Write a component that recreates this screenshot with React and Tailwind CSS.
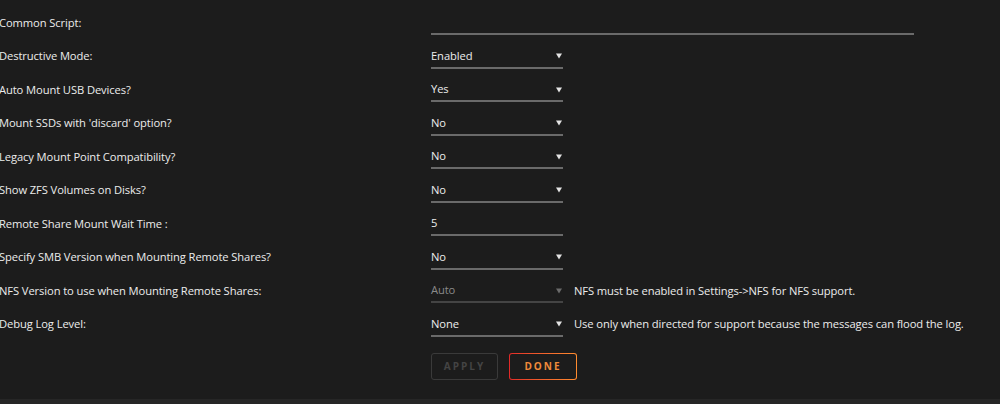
import React from 'react';

const rows = [
  { label: 'Common Script:', type: 'text', value: '', wide: true },
  { label: 'Destructive Mode:', type: 'select', value: 'Enabled' },
  { label: 'Auto Mount USB Devices?', type: 'select', value: 'Yes' },
  { label: "Mount SSDs with 'discard' option?", type: 'select', value: 'No' },
  { label: 'Legacy Mount Point Compatibility?', type: 'select', value: 'No' },
  { label: 'Show ZFS Volumes on Disks?', type: 'select', value: 'No' },
  { label: 'Remote Share Mount Wait Time :', type: 'text', value: '5' },
  { label: 'Specify SMB Version when Mounting Remote Shares?', type: 'select', value: 'No' },
  {
    label: 'NFS Version to use when Mounting Remote Shares:',
    type: 'select',
    value: 'Auto',
    disabled: true,
    note: 'NFS must be enabled in Settings->NFS for NFS support.',
  },
  {
    label: 'Debug Log Level:',
    type: 'select',
    value: 'None',
    note: 'Use only when directed for support because the messages can flood the log.',
  },
];

function Caret({ disabled }) {
  return (
    <svg width="6" height="6" viewBox="0 0 6 6" className="shrink-0">
      <path d="M0 0.5 H6 L3 5.5 Z" fill={disabled ? '#6b6b6b' : '#e4e4e4'} />
    </svg>
  );
}

function Control({ row }) {
  if (row.type === 'text') {
    return (
      <div
        className={`h-[25px] pt-[2px] flex items-center border-b-2 border-[#6a6a6a] text-[#ececec] ${
          row.wide ? 'w-[483px]' : 'w-[132px]'
        }`}
      >
        {row.value}
      </div>
    );
  }
  return (
    <div
      className={`h-[25px] w-[132px] pt-[2px] flex items-center justify-between pr-[1px] border-b-2 ${
        row.disabled ? 'border-[#444444] text-[#8a8a8a]' : 'border-[#6a6a6a] text-[#ececec]'
      }`}
    >
      <span>{row.value}</span>
      <Caret disabled={row.disabled} />
    </div>
  );
}

export default function App() {
  return (
    <div
      className="w-[1000px] h-[404px] bg-[#1c1c1c] flex flex-col overflow-hidden"
      style={{ fontFamily: '"Open Sans", "Liberation Sans", sans-serif' }}
    >
      <div className="flex-1 pt-[10px] -ml-[1px] text-[11.2px] font-medium tracking-[-0.1px] text-[#ececec]">
        {rows.map((row) => (
          <div key={row.label} className="h-[33.5px] flex items-start">
            <div className="w-[432px] h-[24px] pt-[2px] flex items-center">{row.label}</div>
            <Control row={row} />
            {row.note && (
              <div className="h-[24px] pt-[2px] flex items-center ml-[11px]">{row.note}</div>
            )}
          </div>
        ))}

        {/* Buttons */}
        <div className="flex gap-[11px] ml-[432px] mt-[8px] tracking-normal">
          <button className="w-[67px] h-[27px] rounded-[3px] border border-[#3a3a3a] text-[#444444] text-[10px] font-bold tracking-[2px]">
            APPLY
          </button>
          <div className="w-[68px] h-[27px] rounded-[3px] p-[1px] bg-gradient-to-r from-[#e22828] to-[#ff8c2f]">
            <button className="w-full h-full rounded-[2px] bg-[#1c1c1c] text-[#f08a3a] text-[10px] font-bold tracking-[2px]">
              DONE
            </button>
          </div>
        </div>
      </div>
      <div className="h-[5px] bg-[#262626]" />
    </div>
  );
}
